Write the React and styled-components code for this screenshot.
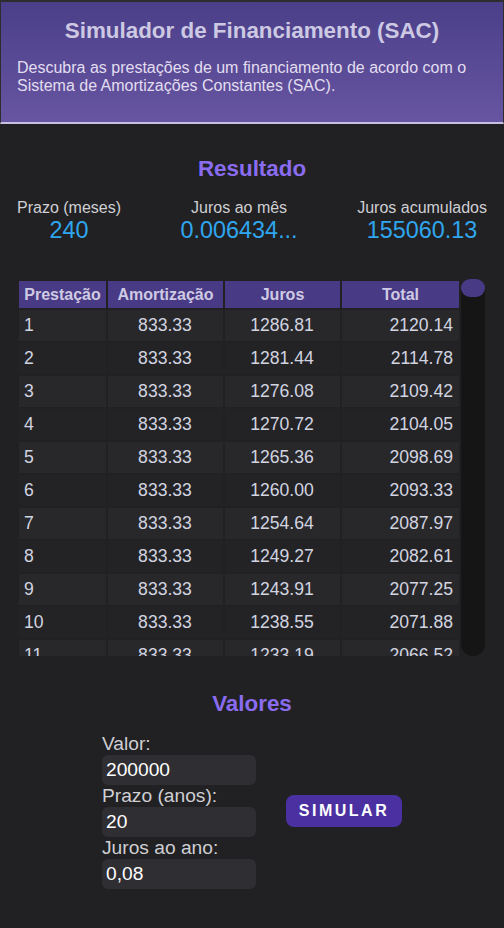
import React from "react";
import styled, { createGlobalStyle } from "styled-components";

const GlobalStyle = createGlobalStyle`
  * {
    box-sizing: border-box;
  }
  body {
    margin: 0;
    background: #212123;
    font-family: "Liberation Sans", Arial, sans-serif;
  }
`;

const VALOR = 200000;
const ANOS = 20;
const JUROS_ANO = 0.08;

const meses = ANOS * 12;
const jurosMes = Math.pow(1 + JUROS_ANO, 1 / 12) - 1;
const amortizacao = VALOR / meses;

const linhas = Array.from({ length: meses }, (_, k) => {
  const saldo = VALOR - k * amortizacao;
  const juros = saldo * jurosMes;
  return {
    n: k + 1,
    amortizacao: amortizacao.toFixed(2),
    juros: juros.toFixed(2),
    total: (amortizacao + juros).toFixed(2),
    jurosNum: juros,
  };
});

const jurosAcumulados = linhas.reduce((s, l) => s + l.jurosNum, 0);

const App = () => {
  return (
    <>
      <GlobalStyle />
      <Header>
        <Title>Simulador de Financiamento (SAC)</Title>
        <Description>
          Descubra as prestações de um financiamento de acordo com o Sistema de
          Amortizações Constantes (SAC).
        </Description>
      </Header>

      <Main>
        <SectionTitle>Resultado</SectionTitle>
        <Stats>
          <Stat>
            <StatLabel>Prazo (meses)</StatLabel>
            <StatValue>{meses}</StatValue>
          </Stat>
          <Stat>
            <StatLabel>Juros ao mês</StatLabel>
            <StatValue>{jurosMes.toFixed(6)}...</StatValue>
          </Stat>
          <Stat>
            <StatLabel>Juros acumulados</StatLabel>
            <StatValue>{jurosAcumulados.toFixed(2)}</StatValue>
          </Stat>
        </Stats>

        <TableArea>
          <TableScroll>
            <Table>
              <thead>
                <tr>
                  <Th width="87px">Prestação</Th>
                  <Th width="115px">Amortização</Th>
                  <Th width="115px">Juros</Th>
                  <Th>Total</Th>
                </tr>
              </thead>
              <tbody>
                {linhas.map((l) => (
                  <Row key={l.n}>
                    <Td align="left">{l.n}</Td>
                    <Td>{l.amortizacao}</Td>
                    <Td>{l.juros}</Td>
                    <Td align="right">{l.total}</Td>
                  </Row>
                ))}
              </tbody>
            </Table>
          </TableScroll>
          <ScrollTrack>
            <ScrollThumb />
          </ScrollTrack>
        </TableArea>

        <SectionTitle>Valores</SectionTitle>
        <Form>
          <Fields>
            <Label htmlFor="valor">Valor:</Label>
            <Input id="valor" defaultValue="200000" />
            <Label htmlFor="prazo">Prazo (anos):</Label>
            <Input id="prazo" defaultValue="20" />
            <Label htmlFor="juros">Juros ao ano:</Label>
            <Input id="juros" defaultValue="0,08" />
          </Fields>
          <Button type="button">SIMULAR</Button>
        </Form>
      </Main>
    </>
  );
};

const Header = styled.header`
  background: linear-gradient(180deg, #4b3f89 0%, #6755a1 100%);
  border-top: 2px solid #2d2d30;
  border-left: 1px solid #2d2d30;
  border-right: 1px solid #2d2d30;
  border-bottom: 2px solid #c6bfe2;
  padding: 16px 16px 26px;
`;

const Title = styled.h1`
  margin: 0 0 15px;
  text-align: center;
  font-size: 22.4px;
  font-weight: bold;
  color: #cdc9e3;
`;

const Description = styled.p`
  margin: 0;
  font-size: 16px;
  line-height: 18.4px;
  color: #e2def0;
`;

const Main = styled.main`
  padding-top: 32px;
`;

const SectionTitle = styled.h2`
  margin: 0;
  text-align: center;
  font-size: 22.4px;
  font-weight: bold;
  color: #8a6cf0;
`;

const Stats = styled.div`
  display: flex;
  justify-content: space-between;
  padding: 0 17px;
  margin: 17px 0 35px;
`;

const Stat = styled.div`
  display: flex;
  flex-direction: column;
  align-items: center;
`;

const StatLabel = styled.span`
  font-size: 16px;
  line-height: 18.4px;
  color: #cfcfd4;
`;

const StatValue = styled.span`
  font-size: 23.4px;
  line-height: 27px;
  color: #2fa6ee;
`;

const TableArea = styled.div`
  display: flex;
  height: 377px;
  margin: 0 19px 35px 17px;
`;

const TableScroll = styled.div`
  flex: 1;
  overflow-y: auto;
  scrollbar-width: none;
  &::-webkit-scrollbar {
    display: none;
  }
`;

const ScrollTrack = styled.div`
  width: 24px;
  flex-shrink: 0;
  background: #151515;
  border-radius: 12px;
`;

const ScrollThumb = styled.div`
  height: 18px;
  background: #483a84;
  border-radius: 12px;
`;

const Table = styled.table`
  width: 100%;
  border-collapse: separate;
  border-spacing: 2px;
  font-size: 17.6px;
  color: #d2d4e0;
`;

const Th = styled.th`
  width: ${({ width }) => width || "auto"};
  height: 27px;
  padding: 0 4px;
  background: #483a84;
  color: #cfcae3;
  font-size: 16px;
  font-weight: bold;
  text-align: center;
`;

const Row = styled.tr`
  background: #232326;
  &:nth-child(odd) {
    background: #28282b;
  }
`;

const Td = styled.td`
  height: 31px;
  padding: 0 6px 0 5px;
  text-align: ${({ align }) => align || "center"};
`;

const Form = styled.form`
  display: flex;
  justify-content: center;
  align-items: center;
  gap: 30px;
  margin-top: 16px;
`;

const Fields = styled.div`
  display: flex;
  flex-direction: column;
  width: 154px;
`;

const Label = styled.label`
  font-size: 19.2px;
  line-height: 22px;
  color: #cfcfd4;
`;

const Input = styled.input`
  height: 30px;
  width: 154px;
  border: none;
  outline: none;
  border-radius: 6px;
  background: #2f2e33;
  color: #ffffff;
  padding: 0 4px;
  font-family: "Liberation Sans", Arial, sans-serif;
  font-size: 19.2px;
`;

const Button = styled.button`
  width: 116px;
  height: 32px;
  border: none;
  border-radius: 8px;
  background: #4a30a0;
  color: #ffffff;
  font-family: "Liberation Sans", Arial, sans-serif;
  font-size: 16px;
  font-weight: bold;
  letter-spacing: 2.5px;
  cursor: pointer;
`;

export default App;
